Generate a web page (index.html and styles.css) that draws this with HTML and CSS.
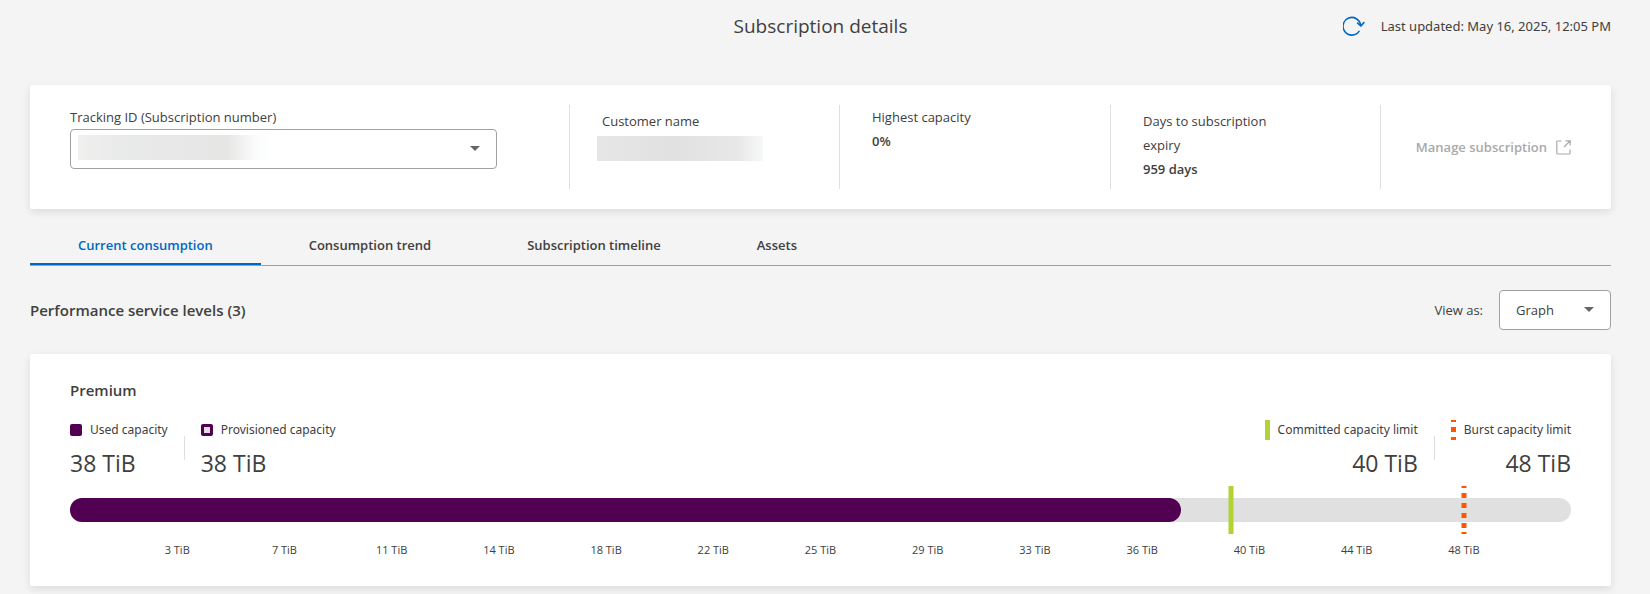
FILE: index.html
```html
<!DOCTYPE html>
<html lang="en">
<head>
<meta charset="utf-8">
<title>Subscription details</title>
<link rel="stylesheet" href="styles.css">
</head>
<body>
<header class="page-header">
  <h1 class="page-title">Subscription details</h1>
  <div class="updated">
    <button class="refresh" type="button" aria-label="Refresh">
      <svg width="22" height="20" viewBox="0 0 22 20" fill="none" stroke="currentColor" stroke-width="1.6" stroke-linecap="round" stroke-linejoin="round">
        <path d="M16 15.4A8.8 8.8 0 1 1 17.6 9.4"/>
        <path d="M14.6 7.2l3.3 2.8 3-3.4"/>
      </svg>
    </button>
    <span>Last updated: May 16, 2025, 12:05 PM</span>
  </div>
</header>

<main>
  <section class="card summary">
    <div class="summary-cell tracking">
      <label for="tracking">Tracking ID (Subscription number)</label>
      <div class="select-wrap">
        <select id="tracking" class="select tracking-select"><option></option></select>
        <svg class="caret" width="10" height="5" viewBox="0 0 10 5"><path d="M0 0h10L5 5z" fill="currentColor"/></svg>
      </div>
    </div>
    <div class="summary-cell low">
      <span>Customer name</span>
      <span class="redacted"></span>
    </div>
    <div class="summary-cell">
      <span>Highest capacity</span>
      <strong>0%</strong>
    </div>
    <div class="summary-cell low">
      <span class="expiry">Days to subscription expiry</span>
      <strong>959 days</strong>
    </div>
    <div class="summary-cell manage">
      <button class="manage-button" type="button" disabled>Manage subscription
        <svg width="15" height="15" viewBox="0 0 15 15" fill="none" stroke="currentColor" stroke-width="1.2">
          <path d="M5.5 1H1.6Q.8 1 .8 1.8v11.4q0 .8.8.8h11.6q.8 0 .8-.8V9.5M9.5.8h4.7v4.7M14 1L8 7"/>
        </svg>
      </button>
    </div>
  </section>

  <nav class="tabs" role="tablist">
    <button class="tab active" type="button" role="tab" aria-selected="true">Current consumption</button>
    <button class="tab" type="button" role="tab">Consumption trend</button>
    <button class="tab" type="button" role="tab">Subscription timeline</button>
    <button class="tab" type="button" role="tab">Assets</button>
  </nav>

  <div class="levels-bar">
    <h2 class="heading">Performance service levels (3)</h2>
    <div class="view-as">
      <label for="view">View as:</label>
      <div class="select-wrap view-wrap">
        <select id="view" class="select"><option>Graph</option></select>
        <svg class="caret" width="10" height="5" viewBox="0 0 10 5"><path d="M0 0h10L5 5z" fill="currentColor"/></svg>
      </div>
    </div>
  </div>

  <section class="card level">
    <h3 class="heading">Premium</h3>
    <div class="legend">
      <div class="legend-item">
        <span class="legend-label"><i class="swatch"></i>Used capacity</span>
        <span class="value">38 TiB</span>
      </div>
      <i class="separator"></i>
      <div class="legend-item">
        <span class="legend-label"><i class="swatch hollow"></i>Provisioned capacity</span>
        <span class="value">38 TiB</span>
      </div>
      <div class="legend-item right push">
        <span class="legend-label"><i class="mark committed"></i>Committed capacity limit</span>
        <span class="value">40 TiB</span>
      </div>
      <i class="separator"></i>
      <div class="legend-item right">
        <span class="legend-label"><i class="mark burst"></i>Burst capacity limit</span>
        <span class="value">48 TiB</span>
      </div>
    </div>
    <div class="chart">
      <div class="track"><div class="used" style="width:74%"></div></div>
      <i class="limit committed" style="left:77.35%"></i>
      <i class="limit burst" style="left:92.86%"></i>
    </div>
    <div class="axis">
      <span>3 TiB</span><span>7 TiB</span><span>11 TiB</span><span>14 TiB</span><span>18 TiB</span><span>22 TiB</span><span>25 TiB</span><span>29 TiB</span><span>33 TiB</span><span>36 TiB</span><span>40 TiB</span><span>44 TiB</span><span>48 TiB</span>
    </div>
  </section>
</main>
</body>
</html>
```

FILE: styles.css
```css
* { box-sizing: border-box; }

body {
  margin: 0;
  padding: 0 39px 8px 30px;
  background: #f4f4f4;
  color: #404040;
  font: 13px/24px "Segoe UI", "Open Sans", "Noto Sans", sans-serif;
}

button, select { font: inherit; color: inherit; }
button { background: none; border: 0; padding: 0; }
h1, h2, h3 { margin: 0; }
strong { font-weight: 600; }

.page-header {
  display: grid;
  grid-template-columns: 1fr auto 1fr;
  align-items: center;
  height: 51px;
}
.page-title { grid-column: 2; font-size: 19px; font-weight: 400; }
.updated {
  display: flex;
  justify-content: flex-end;
  align-items: center;
  gap: 16px;
  font-family: "Segoe UI", "Noto Sans", sans-serif;
}
.refresh { display: flex; color: #0067c5; }

.card {
  background: #fff;
  border-radius: 2px;
  box-shadow: 0 3px 8px rgba(0, 0, 0, 0.1);
}

.summary {
  display: grid;
  grid-template-columns: 499fr 270fr 271fr 270fr 191fr;
  margin-top: 34px;
  padding: 20px 40px;
  min-height: 124px;
}
.summary-cell { display: flex; flex-direction: column; }
.summary-cell + .summary-cell { border-left: 1px solid #e0e0e0; padding-left: 32px; }
.summary-cell.low { padding-top: 4px; }
.tracking { padding-right: 72px; }
.expiry { max-width: 150px; }
.redacted {
  width: 166px;
  height: 25px;
  margin: 3px 0 0 -5px;
  background: linear-gradient(90deg, #e6e6e6, #e1e1e1 45%, #e8e8e8 85%, #f7f8f8);
}
.summary-cell.manage { justify-content: center; align-items: flex-end; padding: 0; }
.summary-cell + .manage { padding-left: 0; }
.manage-button { display: flex; align-items: center; gap: 9px; color: #a9a9a9; font-weight: 600; white-space: nowrap; }

.select-wrap { position: relative; }
.select {
  display: block;
  width: 100%;
  height: 40px;
  padding: 0 16px;
  appearance: none;
  background: #fff;
  border: 1px solid #a0a0a0;
  border-radius: 4px;
}
.tracking-select {
  background: #fff linear-gradient(90deg, #f0f0ef, #e9eaea 20%, #e6e6e5 78%, #fafbfb 92%, #fff) no-repeat 7px 5px / 192px 25px;
}
.caret { position: absolute; right: 17px; top: 17px; color: #666; pointer-events: none; }

.tabs { display: flex; margin-top: 16px; border-bottom: 1px solid #a0a0a0; }
.tab { height: 40px; padding: 2px 48px 0; font-weight: 600; border-bottom: 2px solid transparent; }
.tab.active { color: #0067c5; border-bottom-color: #0067c5; }

.levels-bar { display: flex; justify-content: space-between; align-items: center; margin-top: 24px; }
.heading { font-size: 15px; font-weight: 600; }
.view-as { display: flex; align-items: center; gap: 16px; }
.view-wrap { width: 112px; }

.level { margin-top: 24px; padding: 24px 40px; }
.legend { display: flex; margin-top: 16px; font-size: 12px; }
.legend-item { display: flex; flex-direction: column; }
.legend-item.right { align-items: flex-end; }
.push { margin-left: auto; }
.legend-label {
  display: flex;
  align-items: center;
  gap: 8px;
  font-family: "Segoe UI", "Noto Sans", sans-serif;
}
.value { font-size: 23px; line-height: 42px; }
.separator { width: 1px; height: 24px; margin: 18px 16px 0; background: #dedede; }
.swatch { width: 12px; height: 12px; border-radius: 2px; background: #520052; }
.swatch.hollow { border: 3px solid #520052; background: #dedede; }
.mark { width: 5px; height: 20px; }
.committed { background: #b2d235; }
.mark.burst {
  background: linear-gradient(#ff5500 0 2px, transparent 2px 7px, #ff5500 7px 12px, transparent 12px 17px, #ff5500 17px);
}

.chart { position: relative; padding: 12px 0; margin-top: 2px; }
.track { height: 24px; border-radius: 12px; background: #e0e0e0; }
.used { height: 100%; border-radius: 12px; background: #520052; }
.limit { position: absolute; top: 0; bottom: 0; width: 5px; transform: translateX(-50%); }
.limit.burst {
  background: linear-gradient(#ff5500 0 2px, transparent 2px 7px, #ff5500 7px 12px, transparent 12px 17px, #ff5500 17px 22px, transparent 22px 27px, #ff5500 27px 32px, transparent 32px 37px, #ff5500 37px 42px, transparent 42px 46px, #ff5500 46px);
}

.axis { display: flex; margin: 4px 3.5714% 0; font-size: 11px; }
.axis span { flex: 1; text-align: center; }
```
